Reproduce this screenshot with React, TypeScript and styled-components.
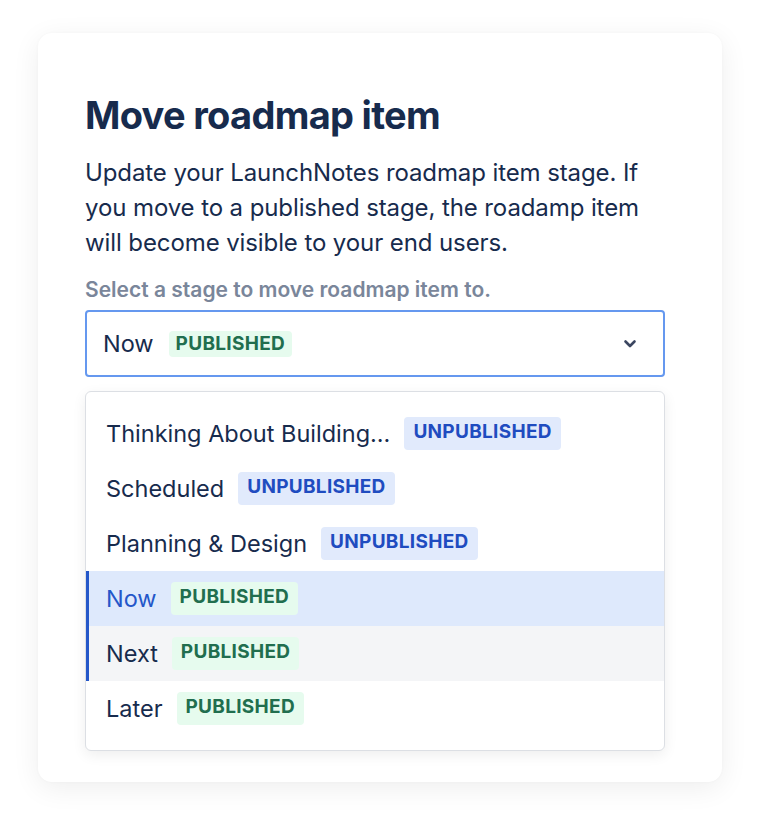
import React from 'react';
import styled, { createGlobalStyle } from 'styled-components';

const GlobalStyle = createGlobalStyle`
	body {
		margin: 0;
		background: #ffffff;
		font-family: Inter, 'Noto Sans', sans-serif;
		-webkit-font-smoothing: antialiased;
	}
`;

type Stage = {
	name: string;
	published: boolean;
	state?: 'selected' | 'hover';
};

const stages: Stage[] = [
	{ name: 'Thinking About Building...', published: false },
	{ name: 'Scheduled', published: false },
	{ name: 'Planning & Design', published: false },
	{ name: 'Now', published: true, state: 'selected' },
	{ name: 'Next', published: true, state: 'hover' },
	{ name: 'Later', published: true },
];

// Styled components
const Page = styled.div`
	padding: 33px 39px 45px 38px;
`;

const Card = styled.div`
	background: #ffffff;
	border-radius: 14px;
	padding: 60px 57px 31px 47px;
	box-shadow: 0 0 3px rgba(0, 0, 0, 0.03), 0 6px 28px rgba(0, 0, 0, 0.07);
`;

const Title = styled.h1`
	margin: 0;
	font-size: 38px;
	line-height: 44px;
	font-weight: 700;
	letter-spacing: -0.7px;
	color: #172b4d;
`;

const Description = styled.p`
	margin: 18px 0 0;
	font-size: 24px;
	line-height: 35px;
	letter-spacing: -0.1px;
	color: #172b4d;
`;

const Label = styled.div`
	margin-top: 16px;
	font-size: 21px;
	line-height: 28px;
	font-weight: 600;
	color: #7a869a;
`;

const SelectBox = styled.div`
	margin-top: 6px;
	height: 67px;
	box-sizing: border-box;
	border: 2px solid #6598ef;
	border-radius: 4px;
	display: flex;
	align-items: center;
	padding: 0 26px 0 16px;
	gap: 15px;
`;

const StageName = styled.span<{ $active?: boolean }>`
	font-size: 23.5px;
	line-height: 28px;
	color: ${({ $active }) => ($active ? '#2457c9' : '#172b4d')};
	white-space: nowrap;
`;

const Badge = styled.span<{ $published: boolean; $tall?: boolean }>`
	display: inline-flex;
	align-items: center;
	box-sizing: border-box;
	height: ${({ $tall }) => ($tall ? '33px' : '26px')};
	padding: ${({ $tall }) => ($tall ? '0 9px 5px' : '0 7px')};
	border-radius: 4px;
	font-size: 19px;
	font-weight: 700;
	letter-spacing: 0.3px;
	text-transform: uppercase;
	background: ${({ $published }) => ($published ? '#e6fbee' : '#e1eafc')};
	color: ${({ $published }) => ($published ? '#216e4e' : '#1f4cc0')};
`;

const Chevron = styled.svg`
	margin-left: auto;
	flex-shrink: 0;
`;

const Menu = styled.div`
	margin-top: 14px;
	border: 1px solid #dcdfe4;
	border-radius: 6px;
	padding: 14px 0;
	background: #ffffff;
	box-shadow: 0 4px 14px rgba(0, 0, 0, 0.07);
`;

const Option = styled.div<{ $state?: 'selected' | 'hover' }>`
	height: 55px;
	display: flex;
	align-items: center;
	gap: 14px;
	padding-left: 17px;
	border-left: 3px solid
		${({ $state }) => ($state ? '#2457c9' : 'transparent')};
	background: ${({ $state }) =>
		$state === 'selected'
			? '#dee9fc'
			: $state === 'hover'
				? '#f4f5f7'
				: 'transparent'};
`;

export default function App() {
	return (
		<>
			<GlobalStyle />
			<Page>
				<Card>
					<Title>Move roadmap item</Title>
					<Description>
						Update your LaunchNotes roadmap item stage. If you move to a
						published stage, the roadamp item will become visible to your end
						users.
					</Description>
					<Label>Select a stage to move roadmap item to.</Label>
					<SelectBox>
						<StageName>Now</StageName>
						<Badge $published>Published</Badge>
						<Chevron width='14' height='10' viewBox='0 0 14 10'>
							<path
								d='M2.5 2.5 L7 7 L11.5 2.5'
								fill='none'
								stroke='#3b4660'
								strokeWidth='2.6'
								strokeLinecap='round'
								strokeLinejoin='round'
							/>
						</Chevron>
					</SelectBox>
					<Menu>
						{stages.map((stage) => (
							<Option key={stage.name} $state={stage.state}>
								<StageName $active={stage.state === 'selected'}>
									{stage.name}
								</StageName>
								<Badge $published={stage.published} $tall>
									{stage.published ? 'Published' : 'Unpublished'}
								</Badge>
							</Option>
						))}
					</Menu>
				</Card>
			</Page>
		</>
	);
}
